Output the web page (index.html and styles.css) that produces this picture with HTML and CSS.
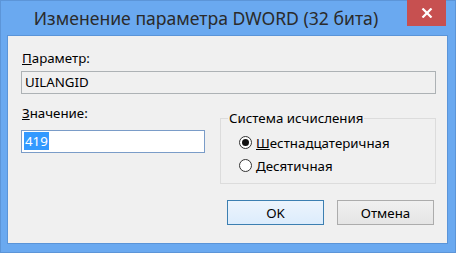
FILE: index.html
```html
<!DOCTYPE html>
<html lang="ru">
<head>
  <meta charset="UTF-8" />
  <title>Изменение параметра DWORD (32 бита)</title>
  <link rel="stylesheet" href="styles.css">
</head>
<body>
  <div class="window">
    <div class="titlebar">
      <div class="title">Изменение параметра DWORD (32 бита)</div>
      <button class="close-btn" aria-label="Закрыть">
        <svg width="12" height="10" viewBox="0 0 12 10">
          <path d="M1.5 0.5 L10.5 9.5 M10.5 0.5 L1.5 9.5" stroke="#fff" stroke-width="2.2" fill="none" />
        </svg>
      </button>
    </div>

    <div class="client">
      <label class="field-label"><u>П</u>араметр:</label>
      <div class="textbox disabled">UILANGID</div>

      <div class="row">
        <!-- Left column: value -->
        <div class="value-col">
          <label class="field-label value-label"><u>З</u>начение:</label>
          <div class="textbox value"><span class="selected">419</span></div>
        </div>

        <!-- Right column: radix group -->
        <fieldset class="group">
          <legend>Система исчисления</legend>
          <div class="radio-row">
            <span class="radio checked"></span>
            <span><u>Ш</u>естнадцатеричная</span>
          </div>
          <div class="radio-row">
            <span class="radio"></span>
            <span><u>Д</u>есятичная</span>
          </div>
        </fieldset>
      </div>

      <div class="buttons">
        <button class="btn default">OK</button>
        <button class="btn">Отмена</button>
      </div>
    </div>
  </div>
</body>
</html>
```

FILE: styles.css
```css
* {
  box-sizing: border-box;
}

body {
  margin: 0;
  font-family: "Noto Sans", "Liberation Sans", sans-serif;
  font-size: 13.3px;
  color: #000;
}

.window {
  width: 456px;
  height: 253px;
  background: #6aa9f0;
  border: 1px solid #5c95d8;
  display: flex;
  flex-direction: column;
}

.titlebar {
  display: flex;
  height: 35px;
  margin-top: -1px;
}

.title {
  flex: 1;
  text-align: center;
  font-size: 17.6px;
  color: #2b2b2b;
  padding-top: 6px;
  padding-left: 4px;
}

.close-btn {
  width: 39px;
  height: 26px;
  margin-right: 9px;
  border: 0;
  padding: 0;
  background: #c75050;
  display: flex;
  align-items: center;
  justify-content: center;
}

.client {
  flex: 1;
  margin: 0 7px 8px 6px;
  background: #f0f0f0;
  border: 1px solid #5a94d8;
  padding: 13px 11px 0 13px;
  display: flex;
  flex-direction: column;
}

.field-label {
  display: block;
  height: 22px;
  line-height: 18px;
  padding-left: 1px;
}

.value-label {
  height: 26px;
}

.textbox {
  height: 23px;
  border: 1px solid #abadb3;
  background: #fff;
  padding: 2px 3px;
  line-height: 17px;
}

.textbox.disabled {
  background: #f0f0f0;
  border-color: #adb2b5;
}

.row {
  display: flex;
  gap: 15px;
  margin-top: 10px;
}

.value-col {
  width: 184px;
}

.textbox.value {
  border-color: #7a9cc8;
  padding-left: 2px;
}

.selected {
  background: #3399ff;
  color: #fff;
  padding: 0 1px;
}

.group {
  flex: 1;
  margin: 6px 0 0 0;
  padding: 5px 0 0 0;
  height: 74px;
  border: 1px solid #dcdcdc;
}

.group legend {
  padding: 0 1px;
  margin-left: 7px;
  line-height: 16px;
}

.radio-row {
  display: flex;
  align-items: center;
  gap: 4px;
  height: 23px;
  padding-left: 18px;
}

.radio {
  width: 13px;
  height: 13px;
  border: 1px solid #333;
  border-radius: 50%;
  background: #fff;
  display: flex;
  align-items: center;
  justify-content: center;
}

.radio.checked::after {
  content: "";
  width: 7px;
  height: 7px;
  border-radius: 50%;
  background: #111;
}

.buttons {
  display: flex;
  justify-content: flex-end;
  gap: 13px;
  margin-top: 16px;
  padding-right: 2px;
}

.btn {
  width: 97px;
  height: 25px;
  font-family: inherit;
  font-size: 13.3px;
  color: #000;
  background: linear-gradient(#f0f0f0, #e5e5e5);
  border: 1px solid #acacac;
  padding: 0;
}

.btn.default {
  border-color: #3c7fb1;
  background: linear-gradient(#ecf4fc, #dcecfc);
}
```
